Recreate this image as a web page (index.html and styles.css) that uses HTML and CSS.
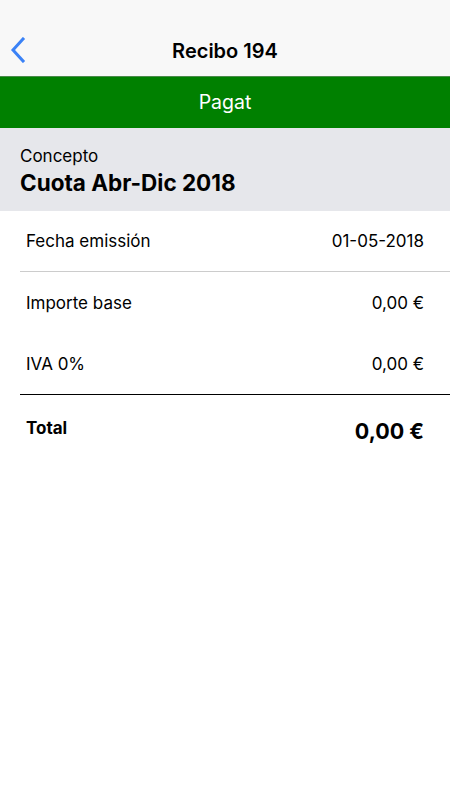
FILE: index.html
```html
<!DOCTYPE html>
<html lang="es">
<head>
<meta charset="utf-8">
<link rel="stylesheet" href="styles.css">
</head>
<body>
<header class="nav">
  <button class="back" aria-label="Back">
    <svg width="16" height="26" viewBox="0 0 16 26"><path d="M13 2 L3 13 L13 24" fill="none" stroke="#3b82f6" stroke-width="3" stroke-linecap="square"/></svg>
  </button>
  <h1 class="title">Recibo 194</h1>
</header>
<div class="status">Pagat</div>
<section class="concept">
  <div class="concept-label">Concepto</div>
  <div class="concept-value">Cuota Abr-Dic 2018</div>
</section>
<div class="rows">
  <div class="row sep"><span>Fecha emissión</span><span>01-05-2018</span></div>
  <div class="row"><span>Importe base</span><span>0,00 €</span></div>
  <div class="row dark"><span>IVA 0%</span><span>0,00 €</span></div>
  <div class="row total"><span class="total-label">Total</span><span class="total-value">0,00 €</span></div>
</div>
</body>
</html>
```
FILE: styles.css
```css
* { box-sizing: border-box; }
html, body { margin: 0; padding: 0; background: #fff; }
body { font-family: Inter, "Noto Sans", sans-serif; color: #000; width: 450px; }
.nav {
  height: 76px; background: #f8f8f8; position: relative;
  display: flex; align-items: flex-end; justify-content: center;
  padding-bottom: 14px;
}
.back {
  position: absolute; left: 8px; top: 37px;
  background: none; border: 0; padding: 0; width: 20px; height: 26px;
}
.title { margin: 0; font-size: 20px; font-weight: 600; line-height: 22px; }
.status {
  height: 52px; background: #008000; color: #fff;
  border-top: 1px solid #4a8a4a;
  display: flex; align-items: center; justify-content: center;
  font-size: 19.5px; padding-bottom: 1px;
}
.concept {
  background: #e6e7eb; height: 83px; padding: 17px 20px 0;
}
.concept-label { font-size: 17px; line-height: 22px; }
.concept-value { font-size: 22.5px; font-weight: 700; line-height: 31px; }
.rows { padding-left: 20px; }
.row {
  height: 61px; display: flex; justify-content: space-between; align-items: center;
  padding: 0 26px 0 6px; font-size: 17px;
}
.row.sep { border-bottom: 1px solid #cccccc; }
.row.dark { border-bottom: 1px solid #000; height: 62px; }
.row.total { height: 70px; align-items: center; padding-top: 2px; }
.total-label { font-weight: 700; font-size: 17px; margin-top: -6px; }
.total-value { font-weight: 700; font-size: 21.5px; }
```
